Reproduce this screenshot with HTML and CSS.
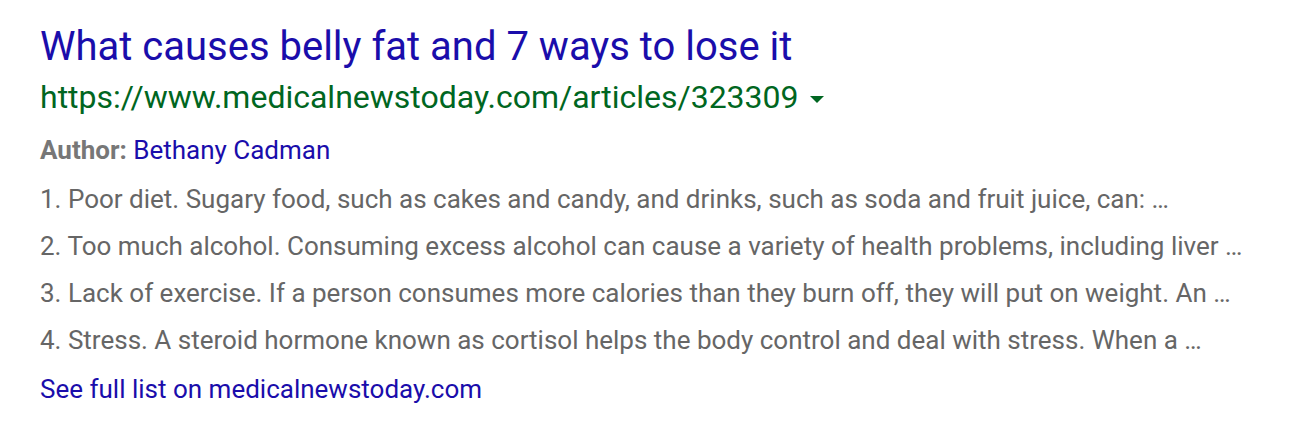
FILE: index.html
```html
<!DOCTYPE html>
<html>
<head>
<meta charset="utf-8">
<link rel="stylesheet" href="styles.css">
</head>
<body>
<div class="result">
  <a class="title" href="#">What causes belly fat and 7 ways to lose it</a>
  <div class="url-row">
    <span class="url">https://www.medicalnewstoday.com/articles/323309</span>
    <span class="caret"></span>
  </div>
  <div class="author"><span class="author-label">Author:</span> <a class="author-link" href="#">Bethany Cadman</a></div>
  <ul class="list">
    <li>1. Poor diet. Sugary food, such as cakes and candy, and drinks, such as soda and fruit juice, can: …</li>
    <li>2. Too much alcohol. Consuming excess alcohol can cause a variety of health problems, including liver …</li>
    <li>3. Lack of exercise. If a person consumes more calories than they burn off, they will put on weight. An …</li>
    <li>4. Stress. A steroid hormone known as cortisol helps the body control and deal with stress. When a …</li>
  </ul>
  <a class="more" href="#">See full list on medicalnewstoday.com</a>
</div>
</body>
</html>
```

FILE: styles.css
```css
html, body {
  margin: 0;
  padding: 0;
  background: #fff;
}
body {
  font-family: Roboto, Arial, sans-serif;
}
.result {
  padding: 22px 0 0 40px;
  display: flex;
  flex-direction: column;
  align-items: flex-start;
}
a {
  text-decoration: none;
}
.title {
  color: #1a0dab;
  font-size: 40px;
  line-height: 50px;
}
.url-row {
  display: flex;
  align-items: center;
}
.url {
  color: #006621;
  font-size: 32px;
  line-height: 50px;
}
.caret {
  width: 0;
  height: 0;
  border-left: 7px solid transparent;
  border-right: 7px solid transparent;
  border-top: 7px solid #006621;
  margin-left: 11px;
  margin-top: 4px;
}
.author {
  margin-top: 5px;
  font-size: 26px;
  line-height: 47px;
  color: #777;
}
.author-label {
  font-weight: bold;
}
.author-link {
  color: #1a0dab;
}
.list {
  list-style: none;
  margin: 2px 0 0;
  padding: 0;
  color: #666;
  font-size: 26px;
}
.list li {
  line-height: 47px;
}
.more {
  margin-top: 2px;
  color: #1a0dab;
  font-size: 26px;
  line-height: 47px;
}
```
